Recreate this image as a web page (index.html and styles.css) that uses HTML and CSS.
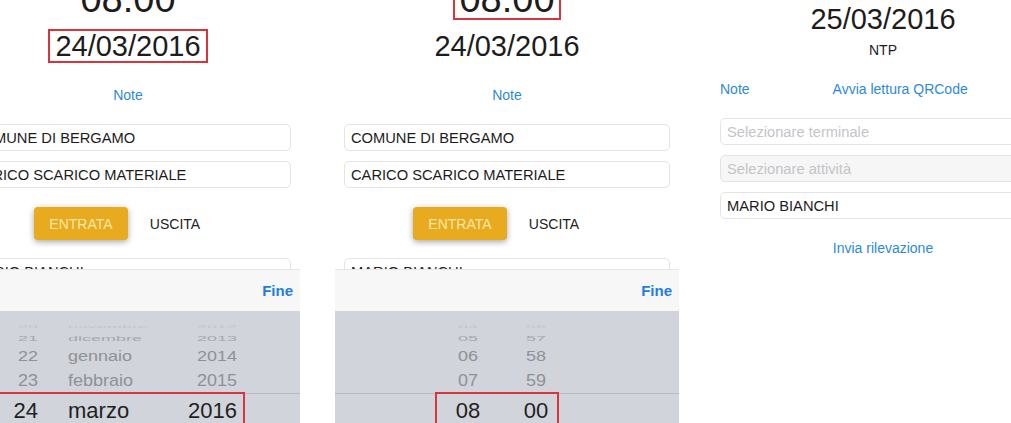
FILE: index.html
```html
<!DOCTYPE html>
<html lang="it">
<head>
    <meta charset="UTF-8">
    <meta name="viewport" content="width=device-width, initial-scale=1.0">
    <title>Rilevazione presenze</title>
    <link rel="stylesheet" href="styles.css">
</head>
<body>
    <div class="screens">
        <!-- schermata 1: selezione data -->
        <div class="screen">
            <div class="time"><span class="time-box">08:00</span></div>
            <div class="date"><span class="date-box marked">24/03/2016</span></div>
            <div class="link-row"><a class="link">Note</a></div>
            <div class="field">COMUNE DI BERGAMO</div>
            <div class="field">CARICO SCARICO MATERIALE</div>
            <div class="toggle">
                <button class="toggle-btn active">ENTRATA</button>
                <button class="toggle-btn">USCITA</button>
            </div>
            <div class="field">MARIO BIANCHI</div>

            <div class="sheet">
                <div class="sheet-bar"><span class="done">Fine</span></div>
                <div class="picker">
                    <div class="prow r0 date-row"><span class="c-day">20</span><span class="c-month">novembre</span><span class="c-year">2012</span></div>
                    <div class="prow r1 date-row"><span class="c-day">21</span><span class="c-month">dicembre</span><span class="c-year">2013</span></div>
                    <div class="prow r2 date-row"><span class="c-day">22</span><span class="c-month">gennaio</span><span class="c-year">2014</span></div>
                    <div class="prow r3 date-row"><span class="c-day">23</span><span class="c-month">febbraio</span><span class="c-year">2015</span></div>
                    <div class="prow sel date-row"><span class="c-day">24</span><span class="c-month">marzo</span><span class="c-year">2016</span></div>
                    <div class="mark mark-date"></div>
                </div>
            </div>
        </div>

        <!-- schermata 2: selezione ora -->
        <div class="screen">
            <div class="time"><span class="time-box marked">08:00</span></div>
            <div class="date"><span class="date-box">24/03/2016</span></div>
            <div class="link-row"><a class="link">Note</a></div>
            <div class="field">COMUNE DI BERGAMO</div>
            <div class="field">CARICO SCARICO MATERIALE</div>
            <div class="toggle">
                <button class="toggle-btn active">ENTRATA</button>
                <button class="toggle-btn">USCITA</button>
            </div>
            <div class="field">MARIO BIANCHI</div>

            <div class="sheet">
                <div class="sheet-bar"><span class="done">Fine</span></div>
                <div class="picker">
                    <div class="prow r0 time-row"><span class="c-num">04</span><span class="c-num">56</span></div>
                    <div class="prow r1 time-row"><span class="c-num">05</span><span class="c-num">57</span></div>
                    <div class="prow r2 time-row"><span class="c-num">06</span><span class="c-num">58</span></div>
                    <div class="prow r3 time-row"><span class="c-num">07</span><span class="c-num">59</span></div>
                    <div class="prow sel time-row"><span class="c-num">08</span><span class="c-num">00</span></div>
                    <div class="mark mark-time"></div>
                </div>
            </div>
        </div>

        <!-- schermata 3: NTP -->
        <div class="screen screen-ntp">
            <div class="ntp-date">25/03/2016</div>
            <div class="ntp-label">NTP</div>
            <div class="ntp-links">
                <a class="link">Note</a>
                <a class="link qr">Avvia lettura QRCode</a>
            </div>
            <div class="field placeholder">Selezionare terminale</div>
            <div class="field placeholder disabled">Selezionare attività</div>
            <div class="field">MARIO BIANCHI</div>
            <div class="link-row send"><a class="link">Invia rilevazione</a></div>
        </div>
    </div>
</body>
</html>
```

FILE: styles.css
```css
body {
    margin: 0;
    width: 1011px;
    height: 423px;
    overflow: hidden;
    background: #fff;
    font-family: "Liberation Sans", Arial, sans-serif;
    color: #1c1c1c;
}

.screens {
    display: flex;
    gap: 35px;
    margin-left: -44px;
}

.screen {
    position: relative;
    flex: 0 0 344px;
    height: 423px;
    padding: 0 9px;
    box-sizing: border-box;
    display: flex;
    flex-direction: column;
    overflow: hidden;
}

.screen-ntp {
    margin-left: -3px;
}

/* ora e data */
.time {
    text-align: center;
    margin-top: -22px;
}

.time-box {
    display: inline-block;
    font-size: 38px;
    line-height: 38px;
    padding: 0 4px;
    border: 2px solid transparent;
}

.date {
    text-align: center;
    margin-top: 9px;
}

.date-box {
    display: inline-block;
    font-size: 29px;
    line-height: 30px;
    padding: 0 5px;
    border: 2px solid transparent;
}

.marked {
    border-color: #d8343c;
}

.link-row {
    text-align: center;
    margin-top: 22px;
    line-height: 20px;
}

.link {
    color: #2d8ad8;
    font-size: 14px;
    line-height: 20px;
}

/* campi */
.field {
    flex-shrink: 0;
    height: 27px;
    line-height: 27px;
    border: 1px solid #e4e4e4;
    border-radius: 5px;
    box-sizing: border-box;
    padding: 0 6px;
    font-size: 14.7px;
    white-space: nowrap;
    margin-top: 10px;
}

.link-row + .field,
.ntp-links + .field {
    margin-top: 19px;
}

.field.placeholder {
    color: #c4c4c9;
}

.field.disabled {
    background: #f6f6f6;
}

/* entrata / uscita */
.toggle {
    display: flex;
    justify-content: center;
    margin-top: 19px;
}

.toggle-btn {
    width: 94px;
    height: 33px;
    border: none;
    border-radius: 4px;
    background: transparent;
    font-family: inherit;
    font-size: 14px;
    color: #222;
    padding: 0;
}

.toggle-btn.active {
    background: #e8ab1f;
    color: #fde6a9;
    box-shadow: 0 2px 6px rgba(0, 0, 0, 0.35);
}

.toggle + .field {
    margin-top: 18px;
}

/* foglio picker in basso */
.sheet {
    position: absolute;
    left: 0;
    right: 0;
    top: 269px;
    bottom: 0;
    display: flex;
    flex-direction: column;
    border-top: 1px solid #e6e6e6;
}

.sheet-bar {
    flex-shrink: 0;
    height: 41px;
    background: #f7f7f8;
    display: flex;
    align-items: center;
    justify-content: flex-end;
    padding-right: 7px;
}

.done {
    color: #1f7fdc;
    font-weight: bold;
    font-size: 15px;
}

.picker {
    position: relative;
    flex: 1;
    background: #d1d4da;
    padding-top: 12px;
}

.prow {
    display: flex;
    align-items: center;
    font-size: 18px;
    color: #8f9197;
    white-space: nowrap;
}

.prow.r0 { height: 8px; transform: scaleY(0.2); color: #c2c5cb; }
.prow.r1 { height: 14px; transform: scaleY(0.45); color: #a5a8af; }
.prow.r2 { height: 22px; transform: scaleY(0.78); }
.prow.r3 { height: 26px; transform: scaleY(0.92); }

.prow.sel {
    height: 34px;
    font-size: 22px;
    color: #1f1f1f;
    border-top: 1px solid #b7bac1;
}

.date-row .c-day {
    width: 82px;
    text-align: right;
}

.date-row .c-month {
    width: 120px;
    margin-left: 30px;
}

.date-row .c-year {
    width: 49px;
    text-align: right;
}

.time-row {
    padding-left: 103px;
    gap: 8px;
}

.time-row .c-num {
    width: 60px;
    text-align: center;
}

.mark {
    position: absolute;
    top: 81px;
    height: 40px;
    border: 2px solid #d8343c;
}

.mark-date {
    left: 38px;
    width: 247px;
}

.mark-time {
    left: 100px;
    width: 120px;
}

/* schermata NTP */
.ntp-date {
    text-align: center;
    font-size: 29px;
    line-height: 30px;
    margin-top: 4px;
}

.ntp-label {
    text-align: center;
    font-size: 14px;
    line-height: 16px;
    margin-top: 8px;
}

.ntp-links {
    display: flex;
    margin-top: 21px;
    line-height: 20px;
}

.ntp-links .qr {
    margin-left: 83px;
}

.screen-ntp .field {
    width: 400px;
}

.send {
    margin-top: 19px;
}
```
